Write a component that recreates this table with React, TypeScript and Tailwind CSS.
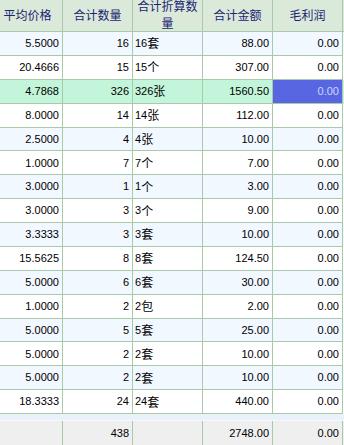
const rows: string[][] = [
  ["5.5000", "16", "16套", "88.00", "0.00"],
  ["20.4666", "15", "15个", "307.00", "0.00"],
  ["4.7868", "326", "326张", "1560.50", "0.00"],
  ["8.0000", "14", "14张", "112.00", "0.00"],
  ["2.5000", "4", "4张", "10.00", "0.00"],
  ["1.0000", "7", "7个", "7.00", "0.00"],
  ["3.0000", "1", "1个", "3.00", "0.00"],
  ["3.0000", "3", "3个", "9.00", "0.00"],
  ["3.3333", "3", "3套", "10.00", "0.00"],
  ["15.5625", "8", "8套", "124.50", "0.00"],
  ["5.0000", "6", "6套", "30.00", "0.00"],
  ["1.0000", "2", "2包", "2.00", "0.00"],
  ["5.0000", "5", "5套", "25.00", "0.00"],
  ["5.0000", "2", "2套", "10.00", "0.00"],
  ["5.0000", "2", "2套", "10.00", "0.00"],
  ["18.3333", "24", "24套", "440.00", "0.00"],
];

const headers = ["平均价格", "合计数量", "合计折算数量", "合计金额", "毛利润"];
const cols = "grid grid-cols-[63px_70px_70px_70px_70px]";
const font = "font-['Liberation_Sans','Noto_Sans_CJK_SC',sans-serif]";

// "16套" -> number part + unit in a slightly larger CJK size
function Unit({ text }: { text: string }) {
  const m = text.match(/^([\d.]+)(.*)$/);
  if (!m) return <>{text}</>;
  return (
    <>
      {m[1]}
      <span className="text-[12px] font-['Noto_Sans_CJK_SC',sans-serif]">{m[2]}</span>
    </>
  );
}

export default function App() {
  return (
    <div className={`w-[344px] h-[445px] overflow-hidden bg-white ${font} text-[11px] text-black`}>
      <div className={`${cols} h-[32px] bg-[#dbe9db] border-b border-[#a9c9a9]`}>
        {headers.map((h, i) => (
          <div
            key={h}
            className={`border-r border-[#a9c9a9] flex items-center justify-center overflow-hidden pb-[3px] text-center text-[12px] leading-[17px] text-[#1b2470] font-['Noto_Sans_CJK_SC',sans-serif] ${
              i === 0 ? "pr-[7px]" : "px-[3px]"
            }`}
          >
            {h}
          </div>
        ))}
      </div>

      {rows.map((r, ri) => {
        const hl = ri === 2;
        const bg = hl ? "bg-[#c3f5da]" : ri % 2 === 0 ? "bg-[#f1f8ff]" : "bg-white";
        return (
          <div key={ri} className={`${cols} h-[23.875px] ${bg}`}>
            {r.map((c, ci) => {
              const sel = hl && ci === 4;
              return (
                <div
                  key={ci}
                  className={`border-r border-b border-[#a9c9a9] flex items-center whitespace-nowrap overflow-hidden ${
                    ci === 2 ? "justify-start pl-[2px]" : "justify-end pr-[3px]"
                  } ${sel ? "bg-[#5866e2] text-[#cfd6ff]" : ""}`}
                >
                  {ci === 2 ? <Unit text={c} /> : c}
                </div>
              );
            })}
          </div>
        );
      })}

      <div className="h-[6px] bg-[#e9f1fa]" />

      <div className={`${cols} h-[25px] bg-[#efefef] border-t border-[#f8f8f8]`}>
        {["", "438", "", "2748.00", "0.00"].map((c, i) => (
          <div key={i} className="border-r border-[#a9c9a9] flex items-center justify-end pr-[3px]">
            {c}
          </div>
        ))}
      </div>
    </div>
  );
}
